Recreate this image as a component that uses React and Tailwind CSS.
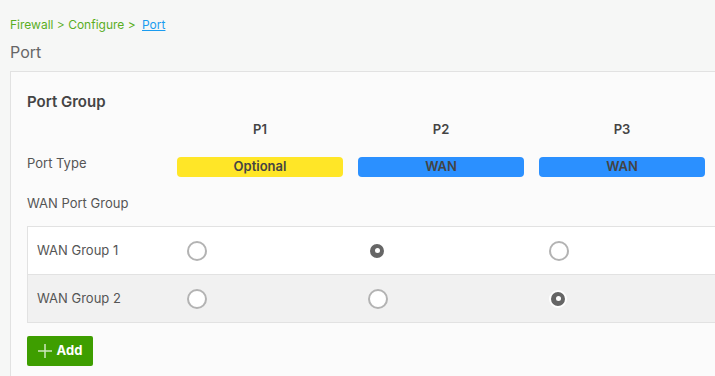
import React, { useState } from 'react';

const ports = [
  { name: 'P1', type: 'Optional', color: 'bg-[#ffe627]' },
  { name: 'P2', type: 'WAN', color: 'bg-[#2b90ff]' },
  { name: 'P3', type: 'WAN', color: 'bg-[#2b90ff]' },
];

const Radio = ({ checked, onClick }) => (
  <button
    onClick={onClick}
    className={
      checked
        ? 'w-[18px] h-[18px] rounded-full bg-[#666] border-[2px] border-white flex items-center justify-center'
        : 'w-[20px] h-[20px] rounded-full border-[2px] border-[#b3b3b3] bg-white'
    }
  >
    {checked && <span className="w-[5px] h-[5px] rounded-full bg-white" />}
  </button>
);

const App = () => {
  // which port belongs to which group
  const [groups, setGroups] = useState({ P2: 1, P3: 2 });

  return (
    <div className="w-[715px] h-[376px] overflow-hidden bg-[#f6f7f6] text-[#555] font-['Inter',sans-serif]">
      {/* Breadcrumb */}
      <div className="pl-[10px] pt-[16px] h-[17px] box-content text-[12px] leading-[17px] text-[#5aae1f]">
        Firewall &gt; Configure &gt; <span className="ml-[3px] text-[#1a9cf0] underline">Port</span>
      </div>
      <h1 className="pl-[10px] mt-[10px] text-[16px] leading-[18px] text-[#666]">Port</h1>

      {/* Card */}
      <div className="ml-[10px] mt-[10px] w-[730px] h-[320px] bg-[#fbfbfb] border border-[#e2e2e2] pl-[16px] pt-[20px]">
        <h2 className="text-[15px] leading-[20px] font-semibold text-[#444]">Port Group</h2>

        <div className="mt-[8px] flex h-[20px] items-center text-[13px] font-semibold text-[#444]">
          <div className="w-[150px]" />
          {ports.map((p) => (
            <div key={p.name} className="w-[166px] mr-[15px] text-center">{p.name}</div>
          ))}
        </div>

        <div className="mt-[17px] flex h-[20px] text-[13px]">
          <div className="w-[150px] leading-[12px]">Port Type</div>
          {ports.map((p) => (
            <div
              key={p.name}
              className={`w-[166px] mr-[15px] h-[20px] rounded-[4px] ${p.color} flex items-center justify-center font-semibold text-[#444]`}
            >
              {p.type}
            </div>
          ))}
        </div>

        <div className="mt-[19px] h-[14px] text-[13px] leading-[14px]">WAN Port Group</div>

        {/* Group table */}
        <div className="mt-[16px] border-t border-l border-[#e2e2e2] text-[13px]">
          {[1, 2].map((g) => (
            <div
              key={g}
              className={`flex items-center h-[48px] border-b border-[#e2e2e2] ${g === 2 ? 'bg-[#f1f1f1]' : 'bg-white'}`}
            >
              <div className="w-[150px] pl-[9px]">WAN Group {g}</div>
              {ports.map((p) => (
                <div key={p.name} className="w-[181px] pl-[9px] flex items-center">
                  <Radio
                    checked={groups[p.name] === g}
                    onClick={() => setGroups({ ...groups, [p.name]: g })}
                  />
                </div>
              ))}
            </div>
          ))}
        </div>

        <button className="mt-[13px] w-[66px] h-[30px] rounded-[2px] bg-[#3e9e00] text-white text-[13px] font-bold flex items-center justify-center gap-[5px]">
          <svg width="14" height="14" viewBox="0 0 14 14" stroke="#cfe8bf" strokeWidth="1.5">
            <path d="M7 0v14M0 7h14" />
          </svg>
          Add
        </button>
      </div>
    </div>
  );
};

export default App;
